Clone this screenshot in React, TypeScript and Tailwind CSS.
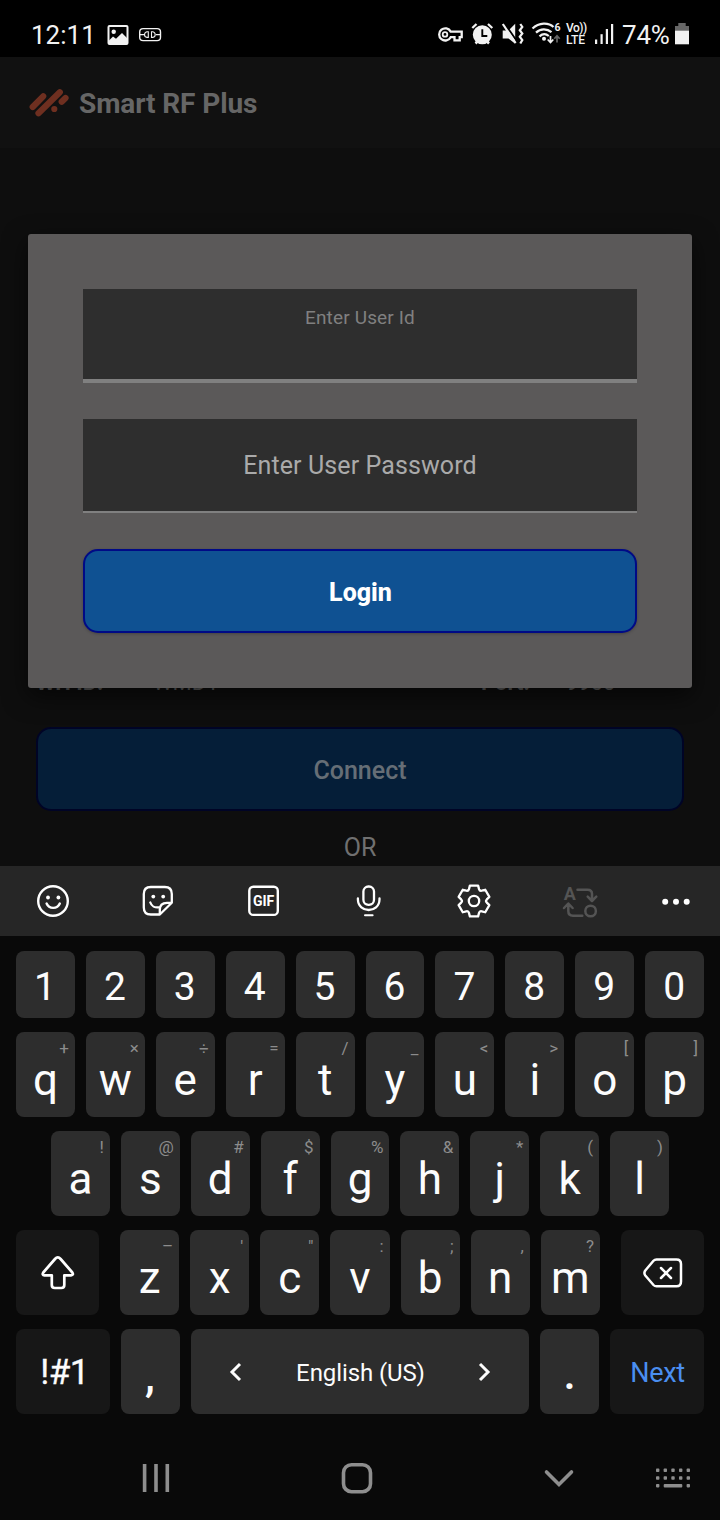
import React from "react";

function StatusBar() {
  return (
    <div className="flex h-[57px] w-full items-start bg-black pt-[18px] text-[#f2f2f2]">
      <div className="ml-[31px] w-[76px] pt-[4px] text-[26px] leading-[26px]">12:11</div>
      <svg className="mt-[6px] h-[22px] w-[22px]" viewBox="107 24 22 22">
        <rect x="108.5" y="26" width="19" height="18" rx="1" fill="none" stroke="currentColor" strokeWidth="2" />
        <circle cx="113.7" cy="31.8" r="2.2" fill="currentColor" />
        <path d="M109 40.5L113 36.5L116 38.7L122 33L127.5 38.5V44H109Z" fill="currentColor" />
      </svg>
      <svg className="mt-[8px] ml-[9px] h-[17px] w-[24px]" viewBox="138 26 24 17" fill="none" stroke="currentColor">
        <rect x="139.7" y="28.6" width="20.8" height="12" rx="3.4" strokeWidth="1.4" />
        <path d="M140 34.6H145M156 34.6H160M148.300 31.800H147C143.700 32.600 143.700 36.700 147 37.400H148.300ZM151.500 31.800H152.800C156 32.600 156 36.700 152.800 37.400H151.500Z" strokeWidth="1.1" />
      </svg>
      <svg className="ml-[275px] h-[32px] w-[26px]" viewBox="437 18 26 32" fill="none" stroke="currentColor">
        <path d="M450.700 31.600A6.100 6.100 0 1 0 450.700 37.200H454.500V40.300H459.700V37.200H461.700V31.600Z" strokeWidth="2.300" />
        <circle cx="445" cy="34.400" r="2.300" strokeWidth="1.800" />
      </svg>
      <svg className="ml-[4px] h-[32px] w-[31px]" viewBox="467 18 31 32" fill="none" stroke="currentColor">
        <circle cx="482.3" cy="34.8" r="9.5" fill="currentColor" stroke="none" />
        <path d="M472.300 28L476.500 24M492.300 28L488 24" strokeWidth="2.3" />
        <path d="M475.500 43.500L478 41M489 43.500L486.500 41" strokeWidth="2.5" />
        <path d="M482.300 29.300V36H487.300" stroke="#000" strokeWidth="1.900" />
      </svg>
      <svg className="h-[32px] w-[32px]" viewBox="498 18 32 32" fill="none" stroke="currentColor">
        <path d="M502.700 30.500H508.500L515.200 23.800V43.700L508.500 38.500H502.700Z" fill="currentColor" stroke="none" />
        <path d="M504.500 23.500L517.500 42" stroke="#000" strokeWidth="2" />
        <path d="M502.800 24L515.600 43" strokeWidth="2.2" />
        <path d="M520.300 24L522.300 27L519.800 30.200L522.300 33.500L519.800 36.800L522.300 40L520.300 43.500" strokeWidth="2.2" />
      </svg>
      <svg className="h-[32px] w-[33px]" viewBox="530 18 33 32" fill="none" stroke="currentColor">
        <path d="M532.500 28.500C539 22.300 548.500 22.300 553.500 27" strokeWidth="2.2" />
        <path d="M536 32.600C540.500 28.400 547 28.400 551.500 32.200" strokeWidth="2.2" />
        <path d="M539.500 36.300C542.500 33.700 546 33.700 548.800 36" strokeWidth="2.2" />
        <circle cx="544" cy="38.700" r="2" fill="currentColor" stroke="none" />
        <path d="M550.500 36V42M547.700 39.500L550.500 42.500L553.300 39.500" strokeWidth="1.7" />
        <path d="M557 42.500V36.500M554.300 38.800L557 35.800L559.700 38.800" stroke="#666" strokeWidth="1.7" />
        <text x="554.500" y="30.700" fontSize="10.500" fontWeight="700" fill="currentColor" stroke="none">6</text>
      </svg>
      <div className="mt-[4px] ml-[3px] w-[26px] text-[12px] leading-[12px] font-medium whitespace-nowrap">
        <div className="tracking-[-0.5px]">Vo))</div>
        <div className="tracking-[-0.1px]">LTE</div>
      </div>
      <svg className="ml-[2px] h-[32px] w-[24px]" viewBox="594 18 24 32" fill="currentColor">
        <rect x="595" y="39.500" width="2.200" height="4.500" />
        <rect x="600.500" y="34.200" width="2.200" height="9.800" />
        <rect x="605.800" y="29" width="2.200" height="15" />
        <rect x="611" y="24" width="2.200" height="20" />
      </svg>
      <div className="ml-[4px] w-[51px] pt-[4px] text-[26px] leading-[26px] tracking-[-0.2px]">74%</div>
      <svg className="h-[32px] w-[18px]" viewBox="673 18 18 32">
        <path d="M675 26H678.300V23H685.700V26H689V31H675Z" fill="#666" />
        <rect x="675" y="30.700" width="14" height="13.600" fill="currentColor" />
      </svg>
    </div>
  );
}

function AppHeader() {
  return (
    <div className="flex h-[91px] items-center bg-[#111111] pl-[28px]">
      <svg className="h-[30px] w-[42px]" viewBox="28 88 42 30" stroke="#6e2f20" strokeWidth="6.200" strokeLinecap="round">
        <path d="M32.700 107L43.200 96.300M38.500 113.300L59.800 92.300M61.700 101.800L65.500 98M54.300 109V109.010" />
      </svg>
      <div className="ml-[9px] pt-[2px] text-[28px] leading-[32px] font-bold tracking-[-0.1px] whitespace-nowrap text-[#666666]">Smart RF Plus</div>
    </div>
  );
}

function LoginDialog() {
  return (
    <div className="absolute top-[86px] left-[28px] flex h-[454px] w-[664px] flex-col rounded-[3px] bg-[#5b5959] px-[55px] pt-[55px] text-center shadow-[0_8px_24px_rgba(0,0,0,0.6)]">
      <div className="h-[94px] border-b-[4px] border-[#808080] bg-[#2e2e2e] pt-[19px] text-[19px] leading-[20px] tracking-[0.15px] text-[#808080]">
        Enter User Id
      </div>
      <div className="mt-[36px] h-[94px] border-b-[2px] border-[#808080] bg-[#2e2e2e] pt-[32px] text-[25px] leading-[30px] tracking-[0.1px] text-[#aaaaaa]">
        Enter User Password
      </div>
      <button className="mt-[36px] flex h-[84px] items-center justify-center rounded-[15px] border-2 border-[#000a86] bg-[#0f5192] pt-[3px] pl-[1px] text-[25px] font-extrabold text-white shadow-[0_1px_3px_rgba(0,0,0,0.25)]">
        Login
      </button>
    </div>
  );
}

function ConnectScreen() {
  return (
    <div className="relative flex h-[718px] flex-col bg-[#0e0e0e] px-[36px] pt-[524px] text-[22px] leading-[22px] text-[#606060]">
      <div className="flex h-[21px] whitespace-nowrap">
        <div className="w-[117px] font-bold">WH ID:</div>
        <div className="w-[328px]">WMD1</div>
        <div className="w-[85px] font-bold">Port:</div>
        <div>9900</div>
      </div>
      <button className="mt-[34px] flex h-[84px] shrink-0 items-center justify-center rounded-[15px] border-2 border-[#000426] bg-[#051e38] pt-[3px] text-[25px] font-medium text-[#666e76]">
        Connect
      </button>
      <div className="mt-[22px] text-center text-[25px] leading-[30px] text-[#707070]">OR</div>
      <LoginDialog />
    </div>
  );
}

const gearPath =
  Array.from({ length: 6 }, (_, k) => {
    const at = (deg: number, r: number) => {
      const a = ((deg + k * 60 - 90) * Math.PI) / 180;
      return `${(474 + r * Math.cos(a)).toFixed(2)} ${(901 + r * Math.sin(a)).toFixed(2)}`;
    };
    return `${k ? "L" : "M"}${at(-15, 15.9)}L${at(15, 15.9)}L${at(23, 12.9)}Q${at(30, 11.3)} ${at(37, 12.9)}`;
  }).join("") + "Z";

function Toolbar() {
  return (
    <div className="flex h-[70px] items-center bg-[#262626] text-white">
      <svg className="ml-[33px] h-[40px] w-[40px]" viewBox="33 881 40 40" fill="none" stroke="currentColor" strokeWidth="2.400" strokeLinecap="round">
        <circle cx="53" cy="901" r="14.800" />
        <circle cx="48" cy="897.500" r="1.900" fill="currentColor" stroke="none" />
        <circle cx="58.400" cy="897.500" r="1.900" fill="currentColor" stroke="none" />
        <path d="M46.600 903.500C49 909.300 57.400 909.300 59.800 903.500" />
      </svg>
      <svg className="ml-[65px] h-[40px] w-[40px]" viewBox="138 881 40 40" fill="none" stroke="currentColor" strokeWidth="2.300" strokeLinecap="round" strokeLinejoin="round">
        <path d="M171.800 902.800V894Q171.800 887 164.800 887H150.800Q143.800 887 143.800 894V907.500Q143.800 914.500 150.800 914.500H159.800L171.800 902.800H167Q159.800 903 159.800 909.500V914.500" />
        <circle cx="153.300" cy="896.600" r="1.900" fill="currentColor" stroke="none" />
        <circle cx="163.200" cy="896.600" r="1.900" fill="currentColor" stroke="none" />
        <path d="M150.300 902.500C151.500 906 155 908 159 907.300" />
      </svg>
      <svg className="ml-[65px] h-[40px] w-[40px]" viewBox="243 881 40 40">
        <rect x="249.300" y="886.700" width="28.500" height="28.200" rx="4" fill="none" stroke="currentColor" strokeWidth="2.400" />
        <text x="263.600" y="905.900" textAnchor="middle" fontSize="14" fontWeight="700" fill="currentColor">GIF</text>
      </svg>
      <svg className="ml-[66px] h-[40px] w-[40px]" viewBox="349 881 40 40" fill="none" stroke="currentColor" strokeWidth="2.300" strokeLinecap="round">
        <rect x="363.400" y="886.500" width="10.600" height="18.300" rx="5" />
        <path d="M357.900 898.500V899.500C358.200 913.500 379.200 913.500 379.500 899.500V898.500" />
        <path d="M365 915.200H372.600" strokeWidth="2" />
      </svg>
      <svg className="ml-[65px] h-[40px] w-[40px]" viewBox="454 881 40 40" fill="none" stroke="currentColor" strokeWidth="2.300" strokeLinejoin="round">
        <path d={gearPath} />
        <circle cx="474" cy="901" r="5.200" />
      </svg>
      <svg className="ml-[66px] h-[40px] w-[40px] text-[#545454]" viewBox="560 881 40 40" fill="none" stroke="currentColor" strokeWidth="2.500" strokeLinecap="round" strokeLinejoin="round">
        <text x="569.700" y="900.300" textAnchor="middle" fontSize="18" fontWeight="700" fill="currentColor" stroke="none">A</text>
        <path d="M577.500 889.700H587.500Q592 889.700 592 894V900.500M587.700 896.700L592 901L596.300 896.700" />
        <path d="M582.300 915.700H573Q568.300 915.700 568.300 911V904.500M564 908L568.300 903.500L572.600 908" />
        <circle cx="590.600" cy="911" r="5.300" />
      </svg>
      <svg className="ml-[56px] h-[40px] w-[40px]" viewBox="656 881 40 40" fill="currentColor">
        <circle cx="665.200" cy="901.700" r="3" />
        <circle cx="676" cy="901.700" r="3" />
        <circle cx="686.700" cy="901.700" r="3" />
      </svg>
    </div>
  );
}

function Key({ label, hint }: { label: string; hint?: string }) {
  return (
    <div className="relative flex h-[85px] flex-1 justify-center rounded-[8px] bg-[#2d2d2d] pt-[26px] text-[44px] leading-[44px] text-[#fcfcfc]">
      {label}
      {hint && <span className="absolute top-[8px] right-[6px] text-[17px] leading-[17px] text-[#8c8c8c]">{hint}</span>}
    </div>
  );
}

function LetterKeys({ letters, hints }: { letters: string; hints: string }) {
  return (
    <>
      {letters.split("").map((c, i) => (
        <Key key={c} label={c} hint={hints[i]} />
      ))}
    </>
  );
}

function Keyboard() {
  return (
    <div className="flex h-[493px] flex-col gap-[14px] bg-[#090909] px-[16px] pt-[15px]">
      <div className="flex gap-[11px]">
        {"1234567890".split("").map((n) => (
          <div key={n} className="flex h-[67px] flex-1 justify-center rounded-[8px] bg-[#2d2d2d] pt-[17px] pr-[1px] text-[39px] leading-[39px] text-[#fcfcfc]">
            {n}
          </div>
        ))}
      </div>
      <div className="flex gap-[11px]">
        <LetterKeys letters="qwertyuiop" hints="+×÷=/_<>[]" />
      </div>
      <div className="flex gap-[11px] px-[35px]">
        <LetterKeys letters="asdfghjkl" hints="!@#$%&*()" />
      </div>
      <div className="flex">
        <div className="flex h-[85px] w-[83px] items-center justify-center rounded-[8px] bg-[#171717]">
          <svg className="h-[40px] w-[40px]" viewBox="37.500 1252.500 40 40" fill="none" stroke="#fff" strokeWidth="2.700" strokeLinejoin="round">
            <path d="M54.500 1258.500Q57.300 1255.300 60.100 1258.500L71.800 1272Q73.500 1274.600 70.500 1274.800H63.800V1284.500Q63.800 1287.500 60.800 1287.500H54.300Q51.300 1287.500 51.300 1284.500V1274.800H44Q41.200 1274.600 42.800 1272Z" />
          </svg>
        </div>
        <div className="mx-[21px] flex flex-1 gap-[11px]">
          <LetterKeys letters="zxcvbnm" hints={"–'\":;,?"} />
        </div>
        <div className="flex h-[85px] w-[83px] items-center justify-center rounded-[8px] bg-[#171717]">
          <svg className="h-[40px] w-[44px]" viewBox="641 1252.500 44 40" fill="none" stroke="#fff" strokeWidth="2.500" strokeLinejoin="round" strokeLinecap="round">
            <path d="M656.500 1258.900H676.500Q681 1258.900 681 1263.500V1281Q681 1285.800 676.500 1285.800H656.500Q654.700 1285.800 653.500 1284.500L645.300 1275Q643.500 1272.500 645.300 1270L653.500 1260.300Q654.700 1258.900 656.500 1258.900Z" />
            <path d="M661 1267.500L671 1277.500M671 1267.500L661 1277.500" />
          </svg>
        </div>
      </div>
      <div className="flex gap-[11px] text-[#fcfcfc]">
        <div className="flex h-[85px] w-[94px] justify-center rounded-[8px] bg-[#171717] pt-[26px] pl-[3px] text-[35px] leading-[35px]">
          <span className="tracking-[-0.6px] [-webkit-text-stroke:0.3px_currentColor]">!#1</span>
        </div>
        <div className="flex h-[85px] w-[59px] justify-center rounded-[8px] bg-[#2d2d2d] pt-[25px] pr-[1px] text-[44px] leading-[44px] font-medium">,</div>
        <div className="flex h-[85px] flex-1 items-center justify-between rounded-[8px] bg-[#2d2d2d] px-[35px]">
          <svg className="h-[20px] w-[20px]" viewBox="0 0 20 20" fill="none" stroke="currentColor" strokeWidth="3">
            <path d="M14 2L6 10L14 18" />
          </svg>
          <span className="pt-[3px] pl-[1px] text-[24px] leading-[28px] tracking-[-0.1px] whitespace-nowrap">English (US)</span>
          <svg className="h-[20px] w-[20px]" viewBox="0 0 20 20" fill="none" stroke="currentColor" strokeWidth="3">
            <path d="M6 2L14 10L6 18" />
          </svg>
        </div>
        <div className="flex h-[85px] w-[59px] justify-center rounded-[8px] bg-[#2d2d2d] pt-[23px] text-[44px] leading-[44px] font-medium">.</div>
        <div className="flex h-[85px] w-[94px] items-center justify-center rounded-[8px] bg-[#171717] pt-[3px] pl-[1px] text-[27px] tracking-[-0.3px] text-[#4a8ef0]">Next</div>
      </div>
    </div>
  );
}

function NavBar() {
  return (
    <div className="flex h-[91px] items-start bg-[#090909] pt-[29px] text-[#8e8e8e]">
      <svg className="ml-[136px] h-[40px] w-[40px]" viewBox="136 1458 40 40" fill="none" stroke="currentColor" strokeWidth="3.600">
        <path d="M144.600 1464V1492M156 1464V1492M167.300 1464V1492" />
      </svg>
      <svg className="ml-[161px] h-[40px] w-[40px]" viewBox="337 1458 40 40" fill="none" stroke="currentColor" strokeWidth="3.600">
        <rect x="343.500" y="1464.700" width="27" height="27" rx="8" />
      </svg>
      <svg className="ml-[162px] h-[40px] w-[40px]" viewBox="539 1457.500 40 40" fill="none" stroke="currentColor" strokeWidth="3.600">
        <path d="M546.500 1471.500L559 1484L571.500 1471.500" strokeLinecap="round" />
      </svg>
      <svg className="ml-[74px] h-[40px] w-[40px]" viewBox="653 1458 40 40" fill="currentColor">
        {[1470.3, 1478, 1485.7].map((y, row) =>
          [657.7, 665.3, 673, 680.7, 688.3].map((x, col) =>
            row === 2 && col > 0 && col < 4 ? null : <rect key={`${x}-${y}`} x={x - 1.7} y={y - 1.7} width="3.400" height="3.400" rx="0.800" />
          )
        )}
        <rect x="663.700" y="1484" width="18.600" height="3.400" rx="1" />
      </svg>
    </div>
  );
}

export default function App() {
  return (
    <div className="flex h-[1520px] w-[720px] flex-col overflow-hidden bg-[#090909] font-[Roboto,sans-serif]">
      <StatusBar />
      <AppHeader />
      <ConnectScreen />
      <Toolbar />
      <Keyboard />
      <NavBar />
    </div>
  );
}
